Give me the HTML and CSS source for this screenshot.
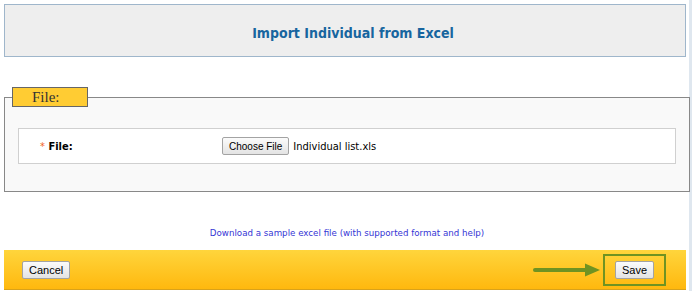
FILE: index.html
```html
<!DOCTYPE html>
<html lang="en">
<head>
    <meta charset="UTF-8">
    <meta name="viewport" content="width=device-width, initial-scale=1.0">
    <title>Import Individual from Excel</title>
    <link rel="stylesheet" href="styles.css">
</head>
<body>
    <div class="page">
        <header class="page-header">
            <h1>Import Individual from Excel</h1>
        </header>

        <form class="import-form">
            <fieldset class="file-group">
                <legend>File:</legend>
                <div class="field-row">
                    <label class="field-label"><span class="required">*</span> File:</label>
                    <div class="file-input">
                        <button type="button" class="btn btn-file">Choose File</button>
                        <span class="file-name">Individual list.xls</span>
                    </div>
                </div>
            </fieldset>

            <p class="sample-link">
                <a href="#">Download a sample excel file (with supported format and help)</a>
            </p>

            <div class="action-bar">
                <button type="button" class="btn">Cancel</button>
                <div class="save-area">
                    <svg class="arrow" width="67" height="16" viewBox="0 0 67 16">
                        <line x1="2" y1="8" x2="54" y2="8" stroke="#6f9322" stroke-width="4" stroke-linecap="round"/>
                        <polygon points="52,1.5 67,8 52,14.5" fill="#6f9322"/>
                    </svg>
                    <div class="highlight">
                        <button type="submit" class="btn">Save</button>
                    </div>
                </div>
            </div>
        </form>
    </div>
</body>
</html>
```

FILE: styles.css
```css
html, body {
    margin: 0;
    padding: 0;
}

body {
    min-height: 291px;
    background: linear-gradient(to left, #dfe7ef 3px, #ffffff 3px);
    font-family: "DejaVu Sans", Tahoma, sans-serif;
    font-stretch: condensed;
    color: #000;
}

.page {
    padding: 4px 2px 0 4px;
}

.page-header {
    box-sizing: border-box;
    margin-right: 4px;
    height: 53px;
    border: 1px solid #9fb6cb;
    background-color: #eeeeee;
    display: flex;
    align-items: center;
    justify-content: center;
    padding: 5px 0 0 16px;
}

.page-header h1 {
    margin: 0;
    font-size: 14px;
    font-weight: bold;
    color: #17659f;
}

.import-form {
    margin-top: 30px;
}

.file-group {
    margin: 0;
    padding: 21px 13px 27px 13px;
    border: 1px solid #888888;
    background-color: #f9f9f9;
    min-width: 0;
}

.file-group legend {
    box-sizing: border-box;
    width: 76px;
    height: 20px;
    padding: 0 0 0 19px;
    margin-left: -6px;
    background-color: #ffcc33;
    border: 1px solid #666666;
    font-family: "Liberation Serif", "Times New Roman", serif;
    font-size: 15px;
    line-height: 18px;
    color: #333333;
}

.field-row {
    display: flex;
    align-items: center;
    height: 34px;
    border: 1px solid #d0d0d0;
    background-color: #ffffff;
}

.field-label {
    width: 182px;
    padding-left: 21px;
    font-size: 11px;
    font-weight: bold;
}

.required {
    color: #f26522;
    font-weight: normal;
}

.file-input {
    display: flex;
    align-items: center;
    gap: 4px;
}

.file-name {
    font-size: 11px;
}

.btn {
    box-sizing: border-box;
    height: 18px;
    padding: 0 6px;
    border: 1px solid #a3a3a3;
    border-radius: 2px;
    background: linear-gradient(#fbfbfb, #e3e3e3);
    font-family: "Liberation Sans", Arial, sans-serif;
    font-size: 11px;
    color: #000;
    cursor: pointer;
}

.btn-file {
    font-size: 10px;
}

.sample-link {
    margin: 34px 0 0 0;
    text-align: center;
    font-size: 8.7px;
    font-stretch: normal;
    line-height: 14px;
}

.sample-link a {
    color: #3535d5;
    text-decoration: none;
}

.action-bar {
    margin: 10px 4px 0 0;
    height: 39px;
    padding: 0 20px 0 18px;
    display: flex;
    align-items: center;
    justify-content: space-between;
    background: linear-gradient(#ffd53c, #ffb80e);
    border-bottom: 1px solid #d9a21a;
}

.save-area {
    display: flex;
    align-items: center;
    gap: 3px;
}

.highlight {
    box-sizing: border-box;
    height: 32px;
    padding: 0 10px;
    display: flex;
    align-items: center;
    border: 2px solid #6f9322;
}
```
